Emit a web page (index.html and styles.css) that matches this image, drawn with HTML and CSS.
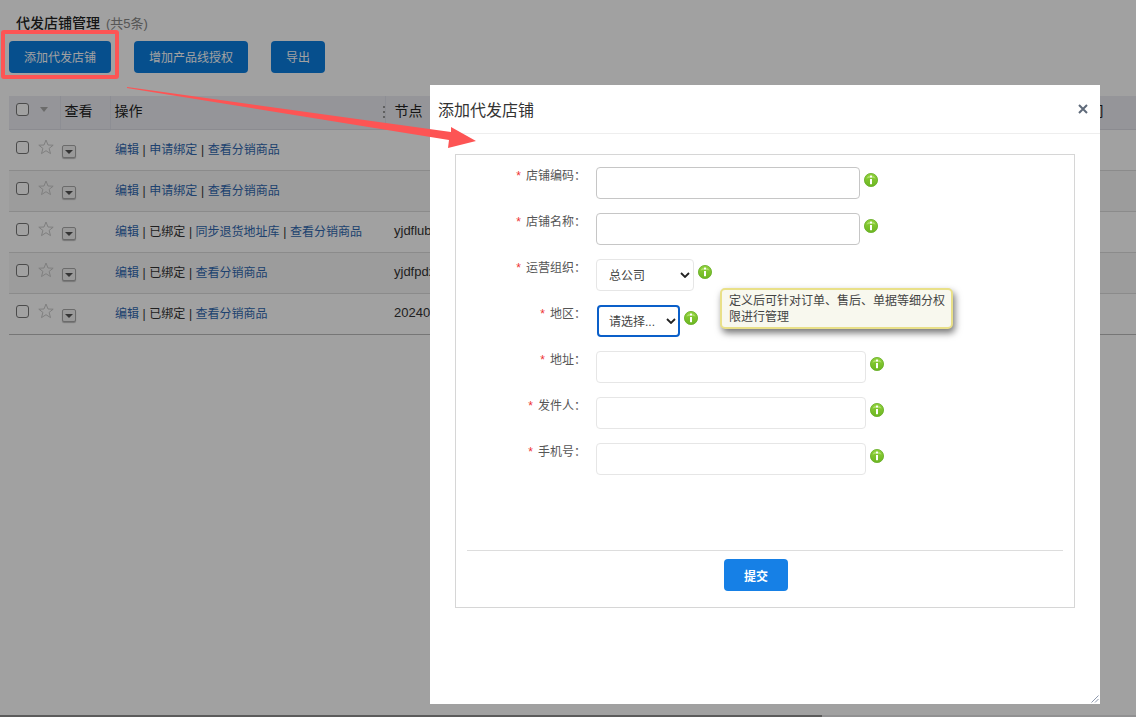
FILE: index.html
```html
<!DOCTYPE html>
<html lang="zh-CN">
<head>
<meta charset="utf-8">
<title>代发店铺管理</title>
<link rel="stylesheet" href="styles.css">
</head>
<body>
<svg class="defs" width="0" height="0"><defs>
  <linearGradient id="infoFill" x1="0" y1="0" x2="0" y2="1"><stop offset="0" stop-color="#8fd03a"/><stop offset="1" stop-color="#6cb621"/></linearGradient>
  <symbol id="infoIcon" viewBox="0 0 14 14">
    <circle cx="7" cy="7" r="6.6" fill="url(#infoFill)" stroke="#66ad24" stroke-width=".8"/>
    <path d="M2.4 5.6 A5 5 0 0 1 11.6 5.6 Q7 3.9 2.4 5.6Z" fill="#aade66"/>
    <rect x="6" y="6" width="2" height="5.2" fill="#fff"/>
    <rect x="6" y="2.6" width="2" height="1.9" fill="#fff"/>
  </symbol>
  <symbol id="starIcon" viewBox="0 0 16 16">
    <polygon points="8,1 10,6 15.2,6.2 11.1,9.4 12.5,14.6 8,11.7 3.5,14.6 4.9,9.4 0.8,6.2 6,6"/>
  </symbol>
</defs></svg>
<main class="page">
  <h1 class="title">代发店铺管理<small>(共5条)</small></h1>
  <div class="toolbar">
    <button class="btn">添加代发店铺</button>
    <button class="btn">增加产品线授权</button>
    <button class="btn">导出</button>
  </div>
  <table class="grid">
    <colgroup><col class="c1"><col class="c2"><col class="c3"><col class="c4"><col class="c5"></colgroup>
    <thead>
      <tr>
        <th class="sel"><span class="check"></span><span class="sort"></span></th>
        <th>查看</th>
        <th class="op">操作<span class="dots"></span></th>
        <th>节点</th>
        <th class="last">时间</th>
      </tr>
    </thead>
    <tbody>
      <tr>
        <td class="sel"><span class="check"></span><svg class="star"><use href="#starIcon"/></svg></td>
        <td><span class="drop"></span></td>
        <td><a>编辑</a> | <a>申请绑定</a> | <a>查看分销商品</a></td>
        <td></td><td></td>
      </tr>
      <tr class="alt">
        <td class="sel"><span class="check"></span><svg class="star"><use href="#starIcon"/></svg></td>
        <td><span class="drop"></span></td>
        <td><a>编辑</a> | <a>申请绑定</a> | <a>查看分销商品</a></td>
        <td></td><td></td>
      </tr>
      <tr>
        <td class="sel"><span class="check"></span><svg class="star"><use href="#starIcon"/></svg></td>
        <td><span class="drop"></span></td>
        <td><a>编辑</a> | 已绑定 | <a>同步退货地址库</a> | <a>查看分销商品</a></td>
        <td class="node">yjdflubx</td><td></td>
      </tr>
      <tr class="alt">
        <td class="sel"><span class="check"></span><svg class="star"><use href="#starIcon"/></svg></td>
        <td><span class="drop"></span></td>
        <td><a>编辑</a> | 已绑定 | <a>查看分销商品</a></td>
        <td class="node">yjdfpdxx</td><td></td>
      </tr>
      <tr>
        <td class="sel"><span class="check"></span><svg class="star"><use href="#starIcon"/></svg></td>
        <td><span class="drop"></span></td>
        <td><a>编辑</a> | 已绑定 | <a>查看分销商品</a></td>
        <td class="node">20240101</td><td></td>
      </tr>
    </tbody>
  </table>
  <div class="scrollbar"><div class="thumb"></div></div>
</main>

<div class="overlay"></div>

<section class="modal">
  <header class="modal-head">
    <h2>添加代发店铺</h2>
    <svg class="close" viewBox="0 0 10 10"><path d="M1 1 L9 9 M9 1 L1 9"/></svg>
  </header>
  <div class="modal-body">
    <form class="form">
      <div class="row">
        <label><em>*</em>店铺编码：</label>
        <input class="field dark" type="text">
        <svg class="info"><use href="#infoIcon"/></svg>
      </div>
      <div class="row">
        <label><em>*</em>店铺名称：</label>
        <input class="field dark" type="text">
        <svg class="info"><use href="#infoIcon"/></svg>
      </div>
      <div class="row">
        <label><em>*</em>运营组织：</label>
        <span class="select-wrap org">
          <select class="select"><option>总公司</option></select>
          <svg class="chev" viewBox="0 0 10 6"><path d="M1 1 L5 5 L9 1"/></svg>
        </span>
        <svg class="info"><use href="#infoIcon"/></svg>
      </div>
      <div class="row">
        <label><em>*</em>地区：</label>
        <span class="select-wrap area">
          <select class="select focus"><option>请选择...</option></select>
          <svg class="chev" viewBox="0 0 10 6"><path d="M1 1 L5 5 L9 1"/></svg>
        </span>
        <svg class="info"><use href="#infoIcon"/></svg>
      </div>
      <div class="row">
        <label><em>*</em>地址：</label>
        <input class="field wide" type="text">
        <svg class="info"><use href="#infoIcon"/></svg>
      </div>
      <div class="row">
        <label><em>*</em>发件人：</label>
        <input class="field wide" type="text">
        <svg class="info"><use href="#infoIcon"/></svg>
      </div>
      <div class="row">
        <label><em>*</em>手机号：</label>
        <input class="field wide" type="text">
        <svg class="info"><use href="#infoIcon"/></svg>
      </div>
      <div class="actions">
        <button type="button" class="submit">提交</button>
      </div>
    </form>
  </div>
  <svg class="resize" viewBox="0 0 8 8"><path d="M0.5 7.5 L7.5 0.5 M4 7.5 L7.5 4"/></svg>
  <div class="tip">定义后可针对订单、售后、单据等细分权限进行管理</div>
</section>

<div class="mark-box"></div>
<svg class="mark-arrow" viewBox="0 0 1136 717"><polygon points="127,87 451,132 451,127 476,141 448,148 449,140 127,88"/></svg>
</body>
</html>
```
FILE: styles.css
```css
* { box-sizing: border-box; }
html, body { margin: 0; height: 717px; overflow: hidden; }
body {
  position: relative;
  background: #fff;
  font-family: "Liberation Sans", "Noto Sans CJK SC", sans-serif;
  font-size: 12px;
  color: #333;
}
.defs { position: absolute; }
.page { height: 717px; padding: 15px 0 0 9px; overflow: hidden; }
.title {
  margin: 0 0 9px 7px;
  height: 17px;
  line-height: 17px;
  font-size: 14px;
  font-weight: 500;
  color: #222;
}
.title small { margin-left: 6px; font-size: 13px; font-weight: 400; color: #888; }
.toolbar { display: flex; gap: 23px; height: 32px; margin-bottom: 23px; }
.btn {
  padding: 0 15px 2px;
  border: 0;
  border-radius: 4px;
  background: #0a7de0;
  color: #fff;
  font: inherit;
}
.grid { width: 1127px; border-collapse: collapse; table-layout: fixed; }
.c1 { width: 51px; }
.c2 { width: 50px; }
.c3 { width: 275px; }
.c4 { width: 500px; }
.c5 { width: 251px; }
.grid th {
  height: 33px;
  padding: 0 4px 5px;
  background: #ecedf3;
  border-bottom: 1px solid #dcdde4;
  border-right: 1px solid #e0e1ea;
  font-size: 14px;
  font-weight: 400;
  text-align: left;
  color: #222;
}
.grid th.last { border-right: 0; padding-left: 190px; }
.grid td {
  height: 41px;
  padding: 0 5px 3px;
  border-bottom: 1px solid #ddd;
  white-space: nowrap;
  overflow: hidden;
  word-spacing: .25px;
}
.grid th:nth-child(4) { padding-left: 9px; }
.grid td.node { padding-left: 9px; font-size: 13px; }
.grid tr.alt td { background: #f8f8f8; }
.grid tbody tr:last-child td { border-bottom-color: #bbb; }
.grid td.sel { padding: 0 0 4px 7px; vertical-align: middle; font-size: 0; }
.grid th.sel { padding: 0 0 5px 7px; font-size: 0; }
.check {
  display: inline-block;
  width: 13px;
  height: 13px;
  border: 1px solid #777;
  border-radius: 3px;
  background: #fff;
  vertical-align: middle;
}
.sort {
  display: inline-block;
  margin-left: 11px;
  border: 4px solid transparent;
  border-top: 5px solid #aaa;
  border-bottom: 0;
  vertical-align: middle;
}
.star {
  width: 16px;
  height: 16px;
  margin: 0 0 2px 9px;
  vertical-align: middle;
  fill: none;
  stroke: #c9c9c9;
  stroke-width: 1;
}
.drop {
  display: block;
  position: relative;
  width: 14px;
  height: 13px;
  margin: 6px 0 0 -3px;
  border: 1px solid #aaa;
  border-radius: 2px;
  background: #f2f2f2;
  box-shadow: 0 1px 1px #bbb;
}
.drop::after {
  content: "";
  position: absolute;
  left: 2px;
  top: 4px;
  border: 4px solid transparent;
  border-top: 4px solid #555;
  border-bottom: 0;
}
.grid a { color: #3068b0; }
.op { position: relative; }
.dots {
  position: absolute;
  right: 0;
  top: 10px;
  width: 2px;
  height: 14px;
  background: repeating-linear-gradient(#999 0 2px, transparent 2px 5px);
}
.scrollbar {
  position: absolute;
  left: 0;
  right: 0;
  bottom: 0;
  height: 2px;
  background: #e6e6e8;
}
.thumb { width: 822px; height: 2px; background: #909090; }
.overlay { position: absolute; inset: 0; background: rgba(0, 0, 0, .37); }

.modal {
  position: absolute;
  left: 430px;
  top: 85px;
  width: 670px;
  height: 619px;
  background: #fff;
}
.modal-head {
  display: flex;
  align-items: center;
  justify-content: space-between;
  height: 49px;
  padding: 0 12px 0 8px;
  border-bottom: 1px solid #eee;
}
.modal-head h2 { margin: 0; font-size: 16px; font-weight: 400; color: #333; }
.close { width: 10px; height: 10px; }
.close path { fill: none; stroke: #5f6a7a; stroke-width: 2; }
.modal-body { padding: 20px 25px 0; }
.form { height: 454px; padding: 12px 11px 0; border: 1px solid #d6d6d6; }
.row { display: flex; align-items: flex-start; height: 32px; margin-bottom: 14px; }
.row label {
  width: 129px;
  padding: 1px 10px 0 0;
  line-height: 17px;
  text-align: right;
  color: #555;
}
.row label em { margin-right: 5px; font-style: normal; color: #e33; }
.field {
  display: block;
  width: 264px;
  height: 32px;
  border: 1px solid #e6e6e6;
  border-radius: 4px;
  background: #fff;
}
.field.dark { border-color: #c6c6c6; }
.field.wide { width: 270px; }
.select-wrap { position: relative; display: block; height: 32px; }
.select-wrap.org { width: 98px; }
.select-wrap.area { width: 83px; margin-left: 1px; }
.select {
  display: block;
  width: 100%;
  height: 32px;
  padding: 1px 0 0 12px;
  appearance: none;
  border: 1px solid #e6e6e6;
  border-radius: 4px;
  background: #fff;
  font: inherit;
  color: #444;
}
.select.focus { border: 2px solid #0a5fc9; padding-left: 10px; }
.chev {
  position: absolute;
  right: 4px;
  top: 13px;
  width: 10px;
  height: 6px;
}
.chev path { fill: none; stroke: #222; stroke-width: 1.8; }
.info { flex: none; width: 14px; height: 14px; margin: 6px 0 0 4px; }
.actions {
  margin: 75px 0 0;
  padding: 8px 18px 0 0;
  border-top: 1px solid #ddd;
  text-align: center;
}
.submit {
  width: 64px;
  height: 32px;
  border: 0;
  border-radius: 4px;
  background: #1680e6;
  color: #fff;
  font: inherit;
  font-weight: 700;
}
.resize { position: absolute; right: 1px; bottom: 1px; width: 8px; height: 8px; }
.resize path { fill: none; stroke: #8e99ad; stroke-width: 1; }
.tip {
  position: absolute;
  left: 290px;
  top: 203px;
  width: 233px;
  height: 41px;
  padding: 3px 4px 3px 7px;
  border: 2px solid #e9e088;
  border-radius: 5px;
  background: #f8f8ee;
  box-shadow: 2px 4px 7px #777;
  line-height: 16px;
  color: #444;
}
.mark-box {
  position: absolute;
  left: 1px;
  top: 30px;
  width: 118px;
  height: 49px;
  border: 4px solid #fd5454;
  border-radius: 3px;
}
.mark-arrow { position: absolute; inset: 0; width: 1136px; height: 717px; pointer-events: none; }
.mark-arrow polygon { fill: #fd5454; }
```
